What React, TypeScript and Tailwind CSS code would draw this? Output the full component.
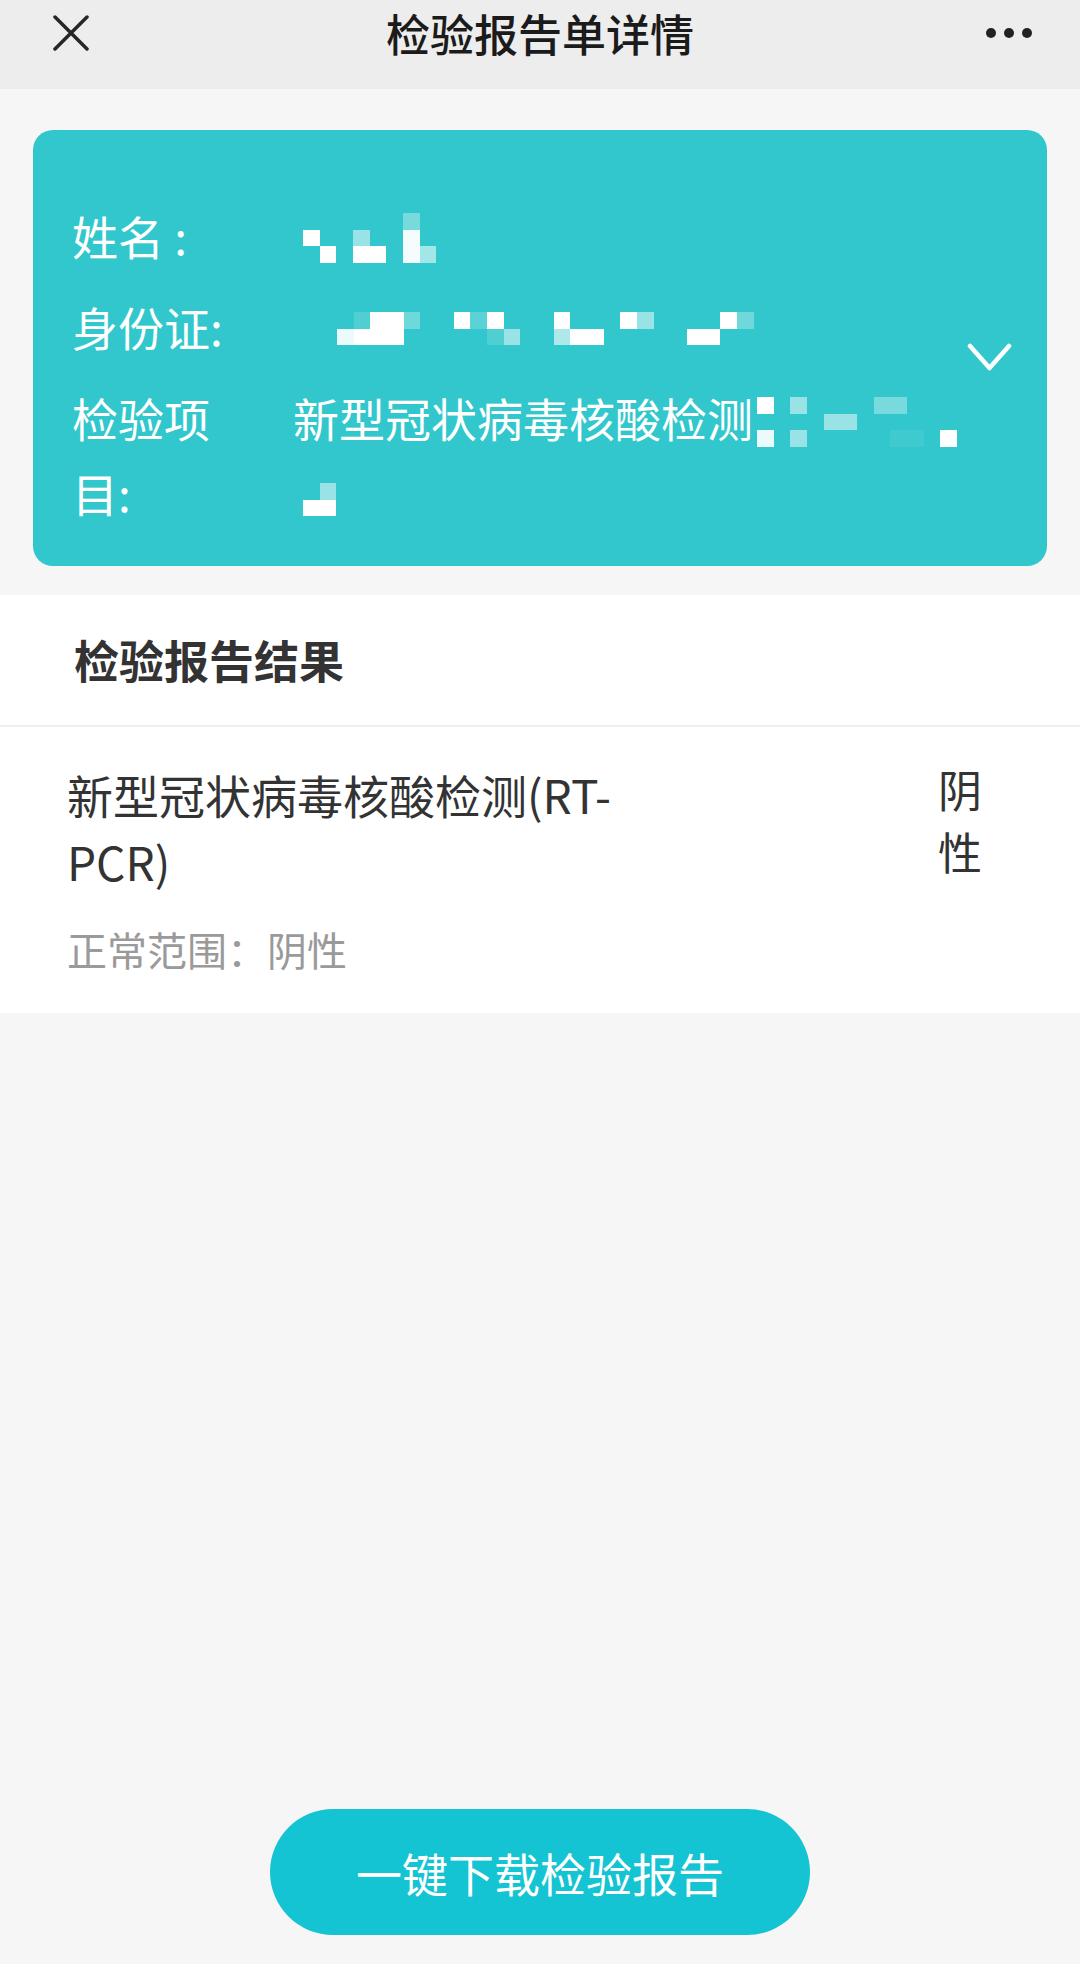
import React from 'react';

type Cell = [number, number, number, number, number];

// censored mosaic blocks, one unit is ~16.7px
function Mosaic({ cells, cols, rows, className }: { cells: Cell[]; cols: number; rows: number; className?: string }) {
  const u = 16.67;
  return (
    <svg className={className} width={cols * u} height={rows * u} viewBox={`0 0 ${cols} ${rows}`} shapeRendering="crispEdges">
      {cells.map(([x, y, w, h, o], i) => (
        <rect key={i} x={x} y={y} width={w} height={h} fill="#ffffff" fillOpacity={o} />
      ))}
    </svg>
  );
}

const nameCells: Cell[] = [
  [0, 1, 1, 1, 1],
  [1, 2, 1, 1, 1],
  [3, 1, 1, 1, 0.5],
  [3, 2, 2, 1, 1],
  [6, 0, 1, 1, 0.35],
  [6, 1, 1, 2, 0.95],
  [7, 2, 1, 1, 0.55],
];

const idCells: Cell[] = [
  [1, 0, 1, 1, 0.15],
  [2, 0, 2, 1, 1],
  [4, 0, 1, 1, 0.3],
  [0, 1, 1, 1, 0.9],
  [1, 1, 3, 1, 1],
  [7, 0, 1, 1, 1],
  [8, 0, 1, 1, 0.2],
  [9, 0, 1, 1, 1],
  [9, 1, 1, 1, 0.15],
  [10, 1, 1, 1, 0.5],
  [13, 0, 1, 1, 1],
  [13, 1, 1, 1, 0.6],
  [14, 1, 2, 1, 1],
  [17, 0, 1, 1, 1],
  [18, 0, 1, 1, 0.5],
  [21, 1, 2, 1, 1],
  [23, 0, 1, 1, 1],
  [24, 0, 1, 1, 0.3],
];

const itemCells: Cell[] = [
  [0, 0, 1, 1, 1],
  [0, 2, 1, 1, 0.9],
  [2, 0, 1, 1, 0.5],
  [2, 2, 1, 1, 0.5],
  [4, 1, 2, 1, 0.5],
  [7, 0, 2, 1, 0.35],
  [8, 2, 2, 1, 0.06],
  [11, 2, 1, 1, 1],
];

const itemTailCells: Cell[] = [
  [1, 0, 1, 1, 0.5],
  [0, 1, 2, 1, 1],
];

export default function App() {
  return (
    <div className="flex h-[1964px] w-[1080px] flex-col bg-[#f6f6f6] font-['Noto_Sans_CJK_SC','Noto_Sans',sans-serif]">
      {/* Header */}
      <div className="grid h-[89px] grid-cols-[1fr_auto_1fr] items-start bg-[#ededed]">
        <div className="flex h-[66px] items-center pl-[53px]">
          <svg width="36" height="36" viewBox="0 0 36 36" stroke="#262626" strokeWidth="3.5" strokeLinecap="round">
            <path d="M2 2L34 34M34 2L2 34" />
          </svg>
        </div>
        <div className="flex h-[66px] items-center text-[44px] font-medium text-[#1b1b1b]">检验报告单详情</div>
        <div className="flex h-[66px] items-center justify-end gap-[8px] pr-[48px]">
          <span className="h-[10px] w-[10px] rounded-full bg-[#222222]" />
          <span className="h-[10px] w-[10px] rounded-full bg-[#222222]" />
          <span className="h-[10px] w-[10px] rounded-full bg-[#222222]" />
        </div>
      </div>

      {/* Patient card */}
      <div className="mx-[33px] mt-[41px] flex items-center rounded-[20px] bg-[#32c7cc] pb-[36px] pl-[39px] pr-[35px] pt-[68px] text-[46px] leading-[75px] text-white">
        <div className="flex flex-1 flex-col gap-[16px]">
          <div className="grid grid-cols-[160px_1fr] gap-x-[61px]">
            <div>姓名 :</div>
            <div className="flex items-start">
              <Mosaic cells={nameCells} cols={8} rows={3} className="ml-[10px] mt-[15px]" />
            </div>
          </div>
          <div className="grid grid-cols-[160px_1fr] gap-x-[61px]">
            <div>身份证:</div>
            <div className="flex items-start">
              <Mosaic cells={idCells} cols={25} rows={2} className="ml-[44px] mt-[23px]" />
            </div>
          </div>
          <div className="grid grid-cols-[160px_1fr] gap-x-[61px]">
            <div>检验项目:</div>
            <div>
              <div className="flex items-start">
                <span>新型冠状病毒核酸检测</span>
                <Mosaic cells={itemCells} cols={12} rows={3} className="ml-[4px] mt-[17px]" />
              </div>
              <div className="flex h-[75px] items-start">
                <Mosaic cells={itemTailCells} cols={2} rows={2} className="ml-[10px] mt-[28px]" />
              </div>
            </div>
          </div>
        </div>
        <svg width="45" height="28" viewBox="0 0 45 28" fill="none" stroke="#ffffff" strokeWidth="4.5" strokeLinecap="round" strokeLinejoin="round" className="-mt-[14px] shrink-0">
          <path d="M3 3L22.5 25L42 3" />
        </svg>
      </div>

      {/* Results */}
      <div className="mt-[29px] bg-white">
        <div className="flex h-[130px] items-center pl-[74px] text-[45px] font-bold text-[#333333]">检验报告结果</div>
        <div className="h-[2px] bg-[#efefef]" />
        <div className="pb-[36px] pl-[67px] pt-[34px]">
          <div className="flex items-start justify-between pr-[96px]">
            <div className="w-[580px] text-[46px] leading-[67px] text-[#333333]">新型冠状病毒核酸检测(RT-PCR)</div>
            <div className="-mt-[3px] w-[46px] text-[44px] leading-[62px] text-[#333333]">阴性</div>
          </div>
          <div className="mt-[26px] text-[40px] leading-[56px] text-[#9a9a9a]">正常范围：阴性</div>
        </div>
      </div>

      {/* Download button */}
      <div className="mt-auto mb-[29px] flex justify-center">
        <button className="flex h-[126px] w-[540px] items-center justify-center rounded-full bg-[#14c4d2] text-[46px] text-white">
          一键下载检验报告
        </button>
      </div>
    </div>
  );
}
